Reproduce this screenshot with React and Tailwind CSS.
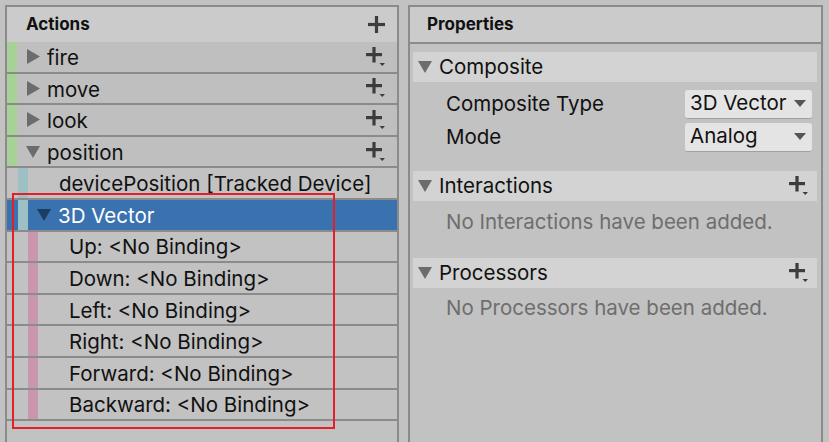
import React from 'react'

const font = { fontFamily: 'Inter, "Noto Sans", sans-serif' }

function PlusIcon({ drop = true }) {
  return (
    <svg width="20" height="20" viewBox="0 0 20 20" className="shrink-0">
      <rect x="0" y="6" width="16" height="3.2" fill="#3d3d3d" />
      <rect x="6.4" y="-0.5" width="3.2" height="16" fill="#3d3d3d" />
      {drop && <polygon points="13.5,16 19,16 16.25,19" fill="#3d3d3d" />}
    </svg>
  )
}

function TriRight() {
  return (
    <svg width="13" height="15" viewBox="0 0 13 15" className="shrink-0">
      <polygon points="0,0 13,7.5 0,15" fill="#6c6c6c" />
    </svg>
  )
}

function TriDown({ color = '#6c6c6c' }) {
  return (
    <svg width="14" height="12" viewBox="0 0 14 12" className="shrink-0">
      <polygon points="0,0 14,0 7,12" fill={color} />
    </svg>
  )
}

function ActionRow({ name, open }) {
  return (
    <div className="flex h-[31.6px] border-b-2 border-[#8b8b8b] bg-[#bfbfbf]">
      <div className="w-[10px] bg-[#a6d197]" />
      <div className="flex-1 flex items-center pl-[9px] pr-[11px]">
        <div className="w-[14px] flex justify-center">{open ? <TriDown /> : <TriRight />}</div>
        <span className="ml-[7px] pt-[3px] flex-1 text-[20.5px] text-[#111]">{name}</span>
        <PlusIcon />
      </div>
    </div>
  )
}

function PartRow({ label }) {
  return (
    <div className="flex h-[31.6px] border-b-2 border-[#8b8b8b] bg-[#c2c2c2]">
      <div className="w-[21px]" />
      <div className="w-[10px] bg-[#c997ad]" />
      <span className="flex items-center pl-[31px] pt-[3px] text-[20.5px] text-[#111]">{label}</span>
    </div>
  )
}

function FoldHeader({ title, plus }) {
  return (
    <div className="flex items-center h-[30px] ml-[3px] mr-[4px] bg-[#d3d3d3] pl-[5px] pr-[8px]">
      <TriDown />
      <span className="ml-[7px] pt-[1px] flex-1 text-[20.5px] text-[#111]">{title}</span>
      {plus && <PlusIcon />}
    </div>
  )
}

function Dropdown({ value }) {
  return (
    <div className="flex items-center justify-between w-[127px] h-[29px] rounded-[3px] bg-[#e4e4e4] border-b border-[#a0a0a0] pl-[5px] pr-[6px]">
      <span className="text-[20.5px] text-[#111] whitespace-nowrap">{value}</span>
      <svg width="12" height="7" viewBox="0 0 12 7" className="shrink-0"><polygon points="0,0 12,0 6,7" fill="#555" /></svg>
    </div>
  )
}

export default function App() {
  return (
    <div style={font} className="relative w-[829px] h-[442px] bg-[#c2c2c2] overflow-hidden flex pt-[5px] pl-[5px] gap-[9px]">
      {/* Actions */}
      <div className="w-[394px] h-[460px] border-2 border-[#8b8b8b] flex flex-col">
        <div className="flex items-center justify-between h-[35px] bg-[#cbcbcb] pl-[19px] pr-[12px]">
          <span className="font-bold text-[17px] text-[#111]">Actions</span>
          <svg width="17" height="17" viewBox="0 0 17 17">
            <rect x="0" y="6.9" width="17" height="3.2" fill="#3d3d3d" />
            <rect x="6.9" y="0" width="3.2" height="17" fill="#3d3d3d" />
          </svg>
        </div>
        <ActionRow name="fire" />
        <ActionRow name="move" />
        <ActionRow name="look" />
        <ActionRow name="position" open />
        <div className="flex h-[31.6px] border-b-2 border-[#8b8b8b] bg-[#c2c2c2]">
          <div className="w-[11px]" />
          <div className="w-[10px] bg-[#9dc0c5]" />
          <span className="flex items-center pl-[31px] pt-[3px] text-[20.5px] text-[#111] whitespace-nowrap">devicePosition [Tracked Device]</span>
        </div>
        <div className="flex h-[31.6px] border-b-2 border-[#8b8b8b] bg-[#3a72b0]">
          <div className="w-[11px]" />
          <div className="w-[10px] bg-[#9dc0c5]" />
          <div className="flex items-center pl-[9px]">
            <TriDown color="#1d3e63" />
            <span className="ml-[7px] pt-[3px] text-[20.5px] text-white">3D Vector</span>
          </div>
        </div>
        <PartRow label="Up: <No Binding>" />
        <PartRow label="Down: <No Binding>" />
        <PartRow label="Left: <No Binding>" />
        <PartRow label="Right: <No Binding>" />
        <PartRow label="Forward: <No Binding>" />
        <PartRow label="Backward: <No Binding>" />
      </div>

      {/* Properties */}
      <div className="w-[415px] h-[460px] border-2 border-[#8b8b8b] flex flex-col">
        <div className="flex items-center h-[37px] bg-[#cbcbcb] border-b-2 border-[#8b8b8b] pl-[17px]">
          <span className="font-bold text-[17px] text-[#111]">Properties</span>
        </div>
        <div className="mt-[8px]">
          <FoldHeader title="Composite" />
          <div className="flex items-center justify-between h-[34px] mt-[5px] pl-[36px] pr-[9px]">
            <span className="text-[20.5px] text-[#111]">Composite Type</span>
            <Dropdown value="3D Vector" />
          </div>
          <div className="flex items-center justify-between h-[30px] mt-[1px] pl-[36px] pr-[9px]">
            <span className="text-[20.5px] text-[#111]">Mode</span>
            <Dropdown value="Analog" />
          </div>
        </div>
        <div className="mt-[19px]">
          <FoldHeader title="Interactions" plus />
          <div className="pl-[36px] h-[43px] flex items-center text-[20.5px] text-[#6e6e6e]">No Interactions have been added.</div>
        </div>
        <div className="mt-[14px]">
          <FoldHeader title="Processors" plus />
          <div className="pl-[36px] h-[40px] flex items-center text-[20.5px] text-[#6e6e6e]">No Processors have been added.</div>
        </div>
      </div>

      {/* highlight box */}
      <div className="absolute left-[12px] top-[193px] w-[323px] h-[236px] border-2 border-[#e3202a] pointer-events-none" />
    </div>
  )
}
